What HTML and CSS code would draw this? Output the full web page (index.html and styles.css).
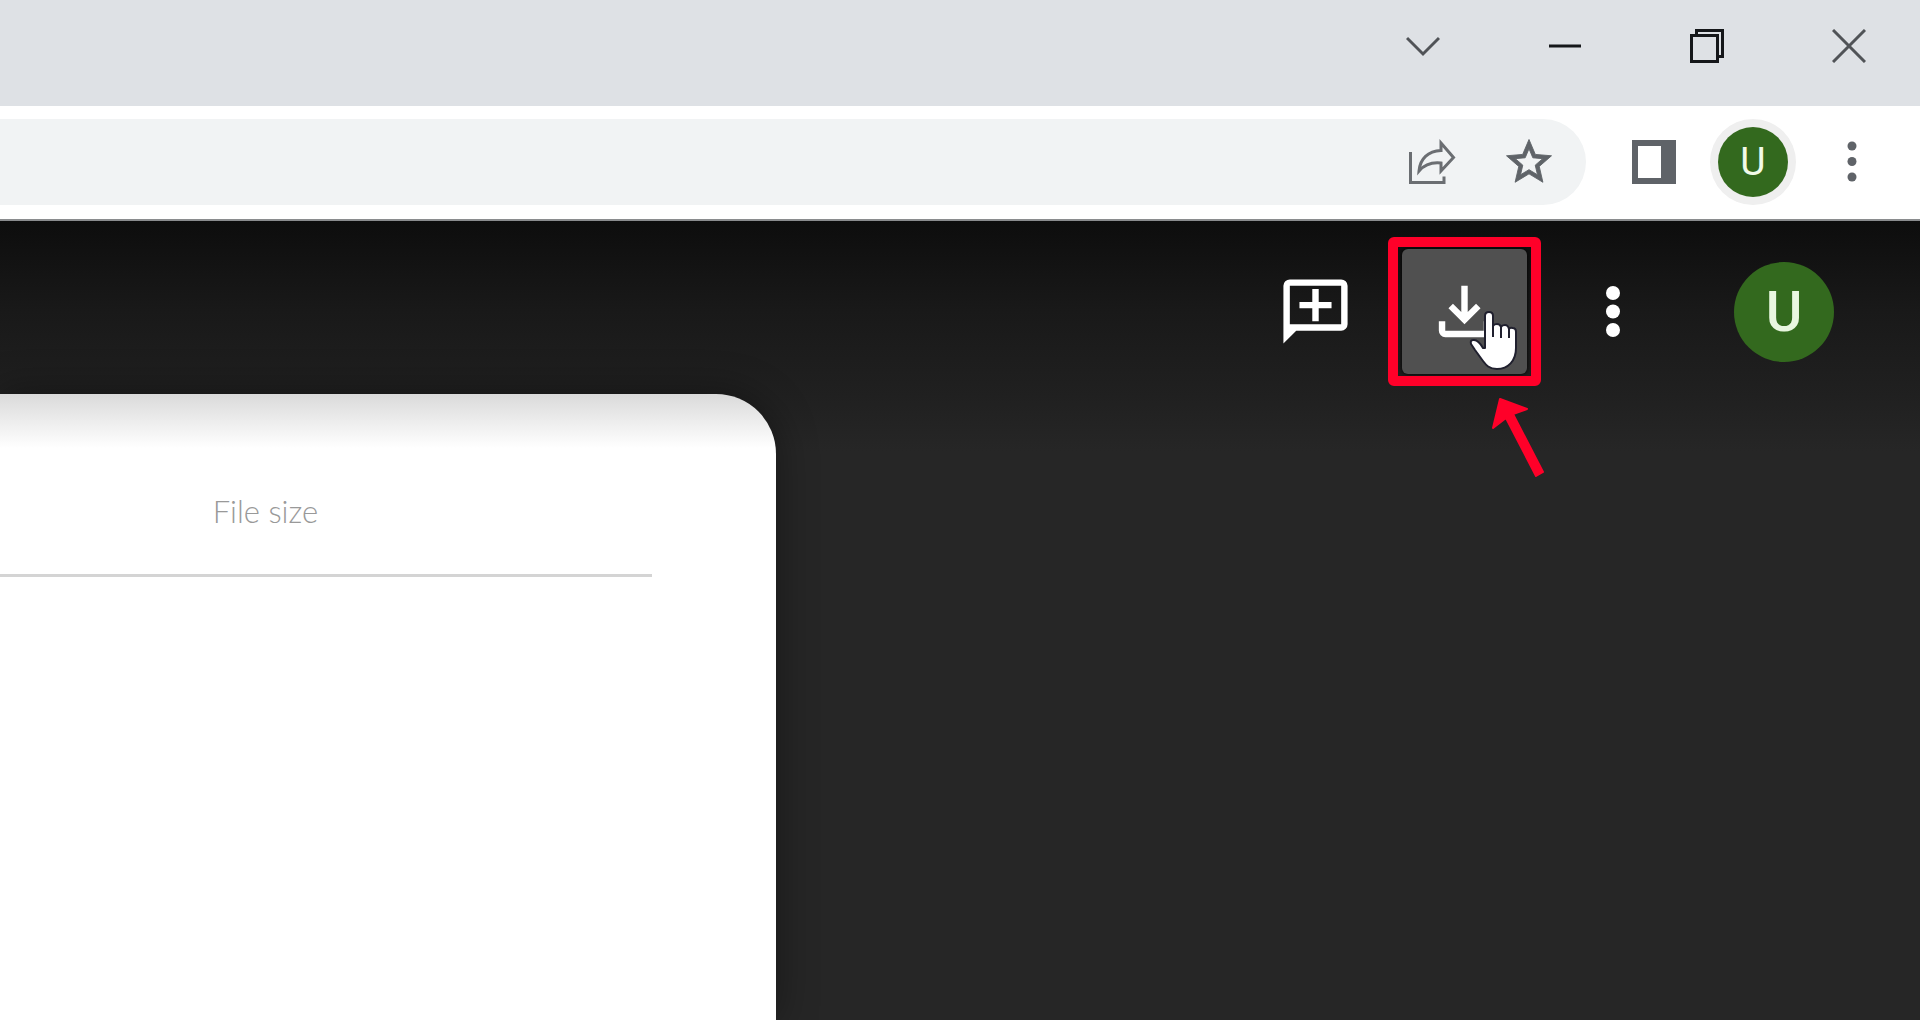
FILE: index.html
```html
<!DOCTYPE html>
<html lang="en">
<head>
<meta charset="utf-8">
<meta name="viewport" content="width=device-width, initial-scale=1">
<title>File viewer</title>
<link rel="stylesheet" href="styles.css">
</head>
<body>
<div class="titlebar">
  <button class="window-button" aria-label="Search tabs"><svg class="thin" width="34" height="34" viewBox="0 0 34 34"><path d="M1 9l16 16L33 9"/></svg></button>
  <button class="window-button" aria-label="Minimize"><svg width="34" height="34" viewBox="0 0 34 34"><path d="M1 17h32"/></svg></button>
  <button class="window-button" aria-label="Restore"><svg width="34" height="34" viewBox="0 0 34 34"><path d="M1.500 6.500h26v26h-26zM6.500 6V1.500h26v26H28"/></svg></button>
  <button class="window-button" aria-label="Close"><svg class="thin" width="34" height="34" viewBox="0 0 34 34"><path d="M1 1l32 32M33 1L1 33"/></svg></button>
</div>
<div class="toolbar">
  <div class="address">
    <input class="address-input" type="text" aria-label="Address">
    <button class="icon-button" aria-label="Share"><svg width="50" height="48" viewBox="0 0 50 48"><g fill="none" stroke="#6b6e72" stroke-width="3"><path d="M4.500 14v30.500H38v-6"/><path stroke-width="3" d="M35 5l12.500 14.500L35 33V25C26 24 19 26 13 33 14 21 22 13 35 12.500z"/></g></svg></button>
    <button class="icon-button" aria-label="Bookmark"><svg width="54" height="54" viewBox="0 0 24 24"><path fill="#5f6368" stroke="#5f6368" stroke-width=".4" d="M22 9.240l-7.190-.62L12 2 9.190 8.630 2 9.240l5.460 4.730L5.820 21 12 17.270 18.180 21l-1.630-7.030L22 9.240zM12 15.400l-3.760 2.270 1-4.280-3.320-2.880 4.380-.38L12 6.100l1.710 4.040 4.380.38-3.320 2.880 1 4.280L12 15.400z"/></svg></button>
  </div>
  <button class="panel-button" aria-label="Side panel"><svg width="44" height="44" viewBox="0 0 44 44"><path fill="#5f6368" fill-rule="evenodd" d="M0 0h44v44H0zM6 6v32h23V6z"/></svg></button>
  <button class="profile" aria-label="Profile U"><span class="profile-letter">U</span></button>
  <button class="panel-button" aria-label="Browser menu"><svg width="44" height="44" viewBox="0 0 44 44"><g fill="#5f6368"><circle cx="22" cy="6" r="4.500"/><circle cx="22" cy="21.500" r="4.500"/><circle cx="22" cy="37" r="4.500"/></g></svg></button>
</div>
<main class="viewer">
  <header class="actions">
    <button class="action" aria-label="Add a comment"><svg width="77" height="77" viewBox="0 0 24 24"><path fill="#fff" d="M4 2h16a2 2 0 0 1 2 2v12a2 2 0 0 1-2 2H6l-4 4V4a2 2 0 0 1 2-2zm0 2v12h16V4zm7 1h2v4h4v2h-4v4h-2v-4H7V9h4z"/></svg></button>
    <div class="download">
      <button class="action action-hover" aria-label="Download"><svg width="77" height="77" viewBox="0 0 24 24"><path fill="#fff" d="M12 16l-5-5 1.400-1.450 2.600 2.600V4h2v8.150l2.600-2.600L17 11zM6 20q-.825 0-1.412-.587Q4 18.825 4 18v-3h2v3h12v-3h2v3q0 .825-.587 1.413Q18.825 20 18 20z"/></svg></button>
      <svg class="callout" width="170" height="250" viewBox="1388 237 170 250" aria-hidden="true">
        <rect x="1393" y="243" width="143" height="139" rx="1" fill="none" stroke="#ff0029" stroke-width="10" stroke-linejoin="round"/>
        <path fill="#ff0029" stroke="#ff0029" stroke-width="2" stroke-linejoin="round" d="M1500 400l27 10-14 5 30 58-7 4-30-58-13 10z"/>
        <path fill="#fff" stroke="#20202e" stroke-width="2" stroke-linejoin="round" d="M1485 349V317q0-4 4-4t4 4v10q1-2 4-2t4 3q1-2 4-2t4 4q1-2 3.500-1 3.500 0 3.500 4v16c0 13-8 21-19 21-8 0-11-4-14-8l-8-11-4-6q-1-4 2-4 5-1 10 8z"/>
        <path fill="none" stroke="#20202e" stroke-width="2" d="M1493 326v12M1501 327v12M1509 329v10"/>
      </svg>
    </div>
    <button class="action" aria-label="More actions"><svg width="77" height="77" viewBox="0 0 77 77"><g fill="#fff"><circle cx="38" cy="20" r="7"/><circle cx="38" cy="38.500" r="7"/><circle cx="38" cy="57" r="7"/></g></svg></button>
    <button class="account" aria-label="Account U">U</button>
  </header>
  <section class="sheet">
    <table class="files">
      <thead><tr><td></td><th class="size-heading" scope="col">File size</th></tr></thead>
    </table>
  </section>
</main>
</body>
</html>
```
FILE: styles.css
```css
* {
  box-sizing: border-box;
}

body {
  margin: 0;
  min-height: 100vh;
  display: flex;
  flex-direction: column;
  font-family: Roboto, "Liberation Sans", sans-serif;
  background: #262626;
}

button {
  display: flex;
  align-items: center;
  justify-content: center;
  flex: none;
  margin: 0;
  padding: 0;
  border: 0;
  background: none;
  font-family: inherit;
}

svg {
  display: block;
}

.titlebar {
  display: flex;
  justify-content: flex-end;
  height: 106px;
  padding-bottom: 14px;
  background: #dee1e5;
}

.window-button {
  width: 142px;
}

.window-button path {
  fill: none;
  stroke: #15171a;
  stroke-width: 3;
}

.window-button .thin path {
  stroke: #505357;
}

.toolbar {
  display: flex;
  align-items: center;
  height: 115px;
  padding: 0 46px 2px 0;
  border-bottom: 2px solid #8a8c8e;
  background: #fff;
}

.address {
  display: flex;
  align-items: center;
  flex: 1;
  min-width: 0;
  gap: 44px;
  height: 86px;
  margin-right: 46px;
  padding-right: 30px;
  border-radius: 0 43px 43px 0;
  background: #f1f3f4;
}

.address-input {
  flex: 1;
  min-width: 0;
  height: 100%;
  padding: 0 24px;
  border: 0;
  outline: 0;
  background: none;
  font-size: 32px;
}

.icon-button {
  width: 54px;
}

.panel-button {
  width: 44px;
}

.profile {
  width: 86px;
  height: 86px;
  margin: 0 34px;
  border-radius: 50%;
  background: #efefef;
}

.profile-letter {
  width: 70px;
  height: 70px;
  border-radius: 50%;
  background: #33691e;
  color: #f1fbe9;
  font-size: 39px;
  line-height: 70px;
}

.viewer {
  display: flex;
  flex-direction: column;
  flex: 1;
  overflow: hidden;
  background: linear-gradient(#0d0d0d, #191919 90px, #202020 174px, #262626 230px);
}

.actions {
  position: relative;
  z-index: 1;
  display: flex;
  justify-content: flex-end;
  align-items: center;
  gap: 24px;
  height: 173px;
  padding: 8px 86px 0 0;
}

.action {
  width: 125px;
  height: 125px;
  border-radius: 6px;
}

.action-hover {
  background: #505050;
  box-shadow: 0 0 4px #000;
}

.download {
  position: relative;
}

.callout {
  position: absolute;
  top: -13px;
  left: -14px;
  pointer-events: none;
}

.account {
  width: 100px;
  height: 100px;
  margin-left: 34px;
  border-radius: 50%;
  background: #33691e;
  color: #e9f6e0;
  font-size: 56px;
  font-weight: 500;
  line-height: 100px;
}

.sheet {
  flex: 1;
  width: 40.4%;
  padding: 72px 124px 0 0;
  border-radius: 0 60px 0 0;
  background: linear-gradient(#dadada, #fff 54px);
  box-shadow: 0 0 40px #00000066;
}

.files {
  width: 100%;
  border-collapse: collapse;
}

.files td,
.files th {
  height: 109px;
  padding: 0 0 18px;
  border-bottom: 3px solid #d4d4d4;
}

.size-heading {
  width: 439px;
  color: #999;
  font-family: Lato, sans-serif;
  font-size: 31px;
  font-weight: 300;
  line-height: 36px;
  text-align: left;
}
```
